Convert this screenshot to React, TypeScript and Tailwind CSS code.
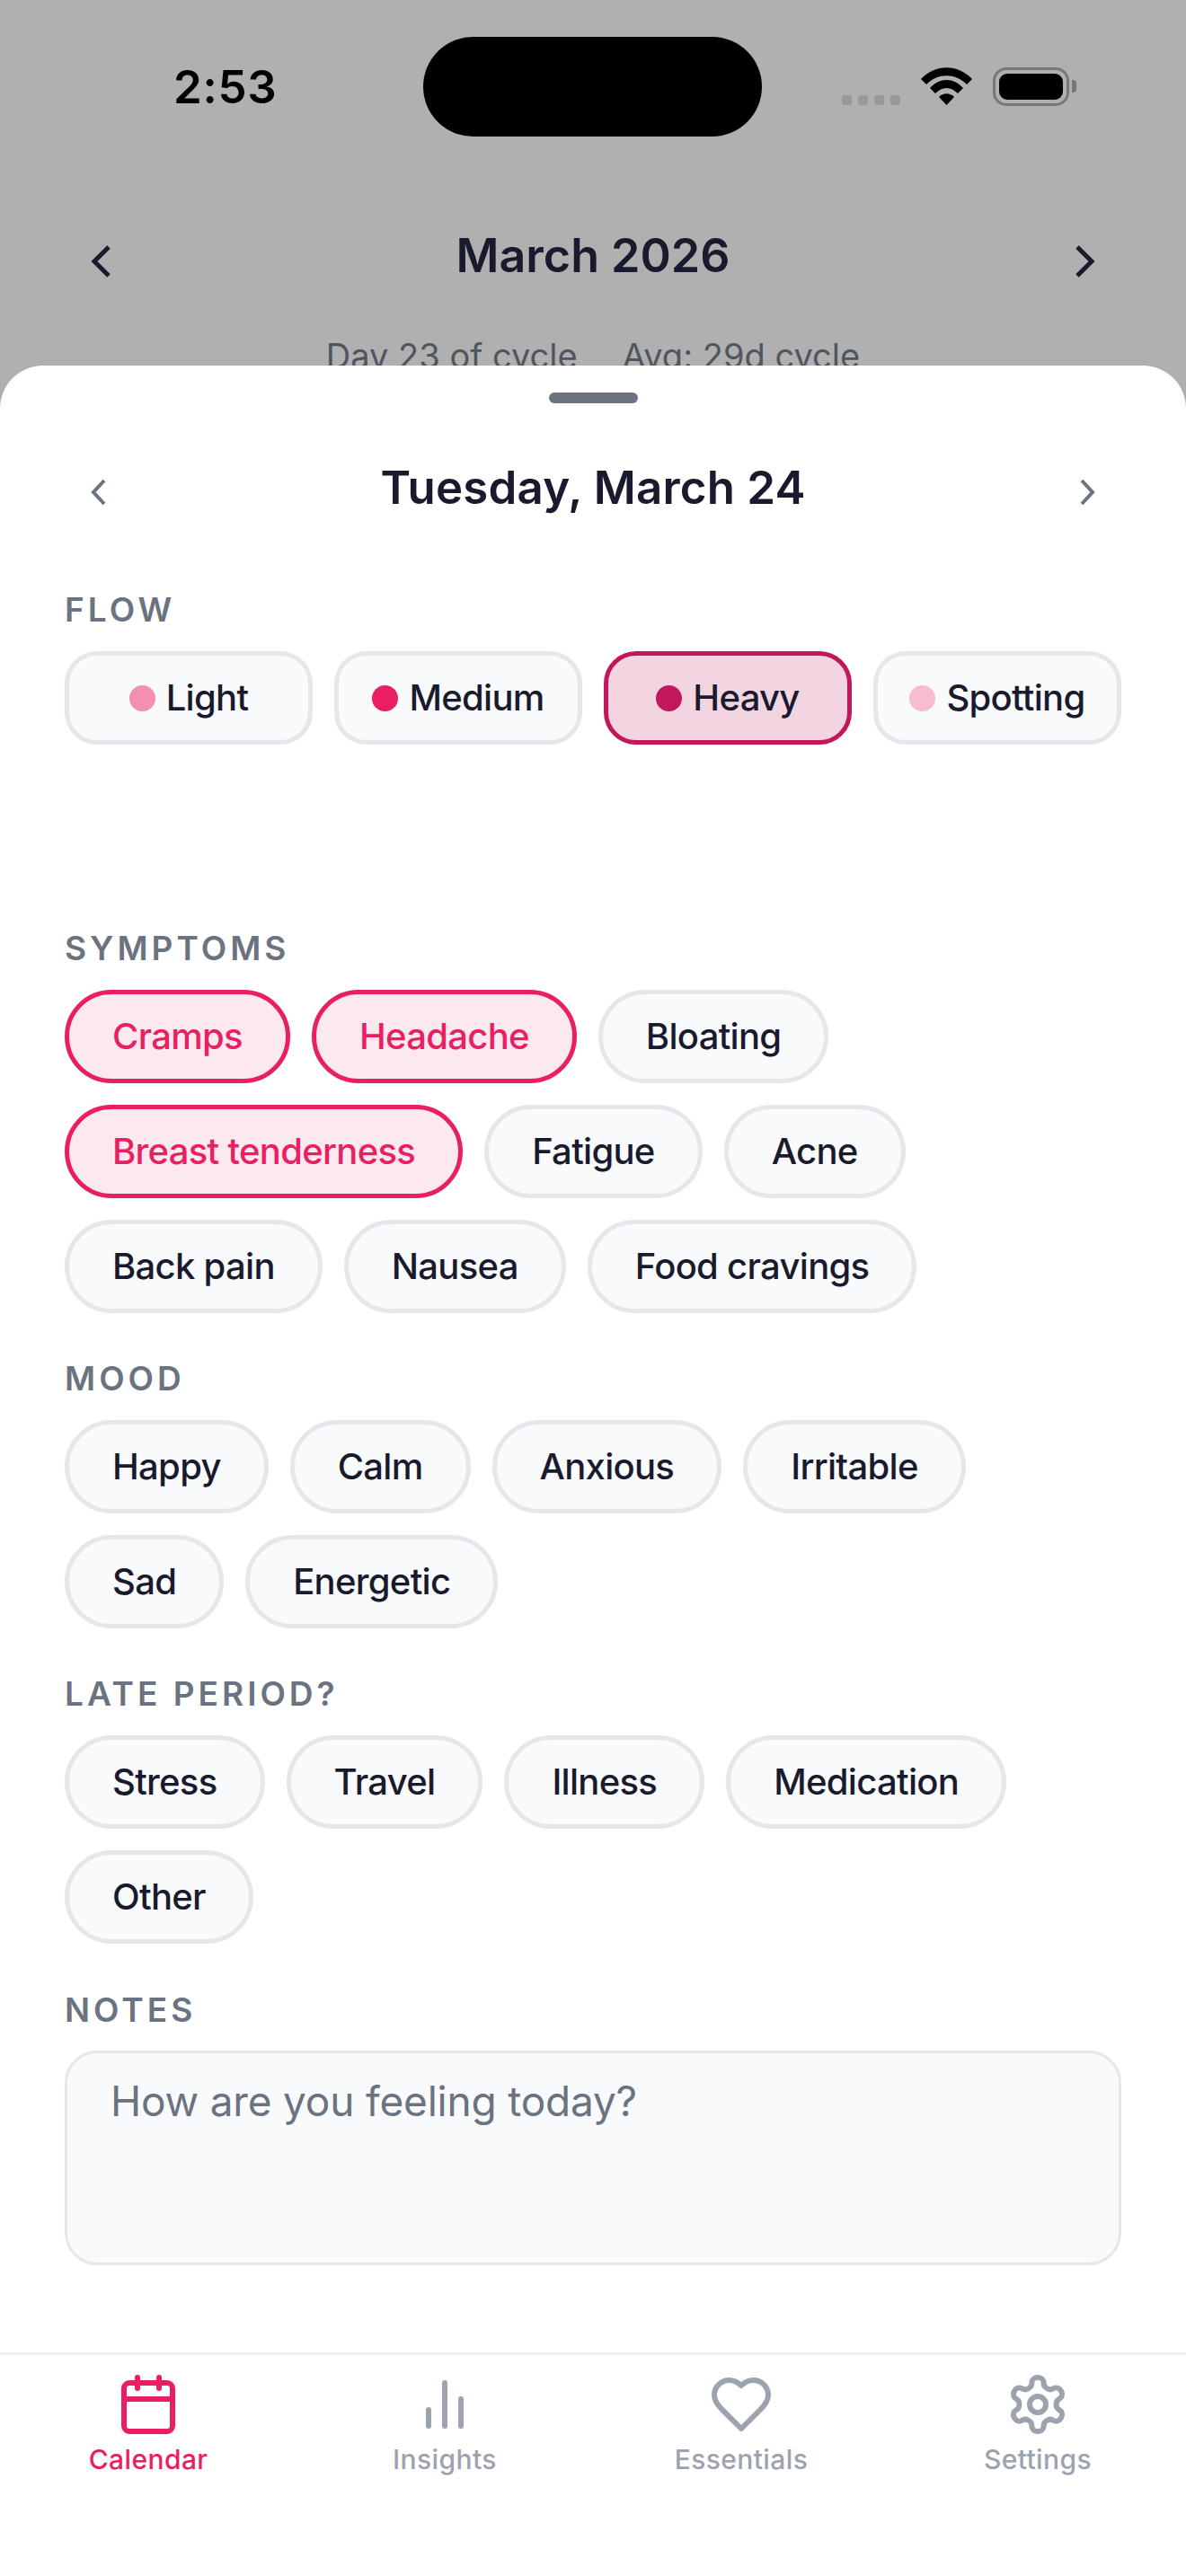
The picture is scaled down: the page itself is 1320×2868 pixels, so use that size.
const FLOW = [
  { label: "Light", dot: "bg-[#F48FB1]" },
  { label: "Medium", dot: "bg-[#E91E63]" },
  { label: "Heavy", dot: "bg-[#C2185B]", active: true },
  { label: "Spotting", dot: "bg-[#F8BBD0]" },
];

const SYMPTOMS = [
  { label: "Cramps", active: true },
  { label: "Headache", active: true },
  { label: "Bloating" },
  { label: "Breast tenderness", active: true },
  { label: "Fatigue" },
  { label: "Acne" },
  { label: "Back pain" },
  { label: "Nausea" },
  { label: "Food cravings" },
];

const MOODS = ["Happy", "Calm", "Anxious", "Irritable", "Sad", "Energetic"];
const LATE = ["Stress", "Travel", "Illness", "Medication", "Other"];

function Chip({ label, active }: { label: string; active?: boolean }) {
  return (
    <button
      className={`h-[104px] px-[48px] rounded-full border-[5px] text-[40px] tracking-[-0.7px] font-[450] ${
        active
          ? "border-[#E91E63] bg-[#FCE8EF] text-[#E91E63]"
          : "border-[#E5E7EB] bg-[#F9FAFB] text-[#1A1A2E]"
      }`}
    >
      {label}
    </button>
  );
}

function SectionLabel({ children }: { children: string }) {
  return (
    <div className="text-[37px] leading-[48px] font-semibold tracking-[4px] text-[#6B7280]">
      {children}
    </div>
  );
}

function ChipGroup({ items }: { items: { label: string; active?: boolean }[] }) {
  return (
    <div className="flex flex-wrap gap-[24px] mt-[22px]">
      {items.map((item) => (
        <Chip key={item.label} label={item.label} active={item.active} />
      ))}
    </div>
  );
}

function BigChevron({ right }: { right?: boolean }) {
  return (
    <svg
      className={`w-[24px] h-[36px] translate-y-[6px] ${right ? "rotate-180" : ""}`}
      viewBox="0 0 24 36"
      fill="none"
      stroke="#1A1A2E"
      strokeWidth="5"
    >
      <path d="M21 2 L5 18 L21 34" />
    </svg>
  );
}

function SmallChevron({ right }: { right?: boolean }) {
  return (
    <svg
      className={`w-[18px] h-[30px] translate-y-[5px] ${right ? "rotate-180" : ""}`}
      viewBox="0 0 18 30"
      fill="none"
      stroke="#6B7280"
      strokeWidth="4"
    >
      <path d="M16 2 L4 15 L16 28" />
    </svg>
  );
}

function StatusBar() {
  return (
    <div className="relative h-[150px]">
      <span className="absolute left-[193px] top-[66px] text-[51px] leading-[62px] font-semibold tracking-[0.7px] text-black">
        2:53
      </span>
      <div className="absolute left-[471px] top-[41px] w-[377px] h-[111px] rounded-full bg-black" />
      <div className="absolute left-[937px] top-[106px] flex gap-[7px]">
        <span className="w-[11px] h-[11px] rounded-[3px] bg-[#999999]" />
        <span className="w-[11px] h-[11px] rounded-[3px] bg-[#999999]" />
        <span className="w-[11px] h-[11px] rounded-[3px] bg-[#999999]" />
        <span className="w-[11px] h-[11px] rounded-[3px] bg-[#999999]" />
      </div>
      <svg className="absolute left-[1025px] top-[75px]" width="57" height="42" viewBox="0 0 57 42">
        <path d="M0 13 C16 -4 41 -4 57 13 L51 19 C38 6 19 6 6 19 Z" fill="#000" />
        <path d="M10 23 C21 11 36 11 47 23 L41 29 C33 21 24 21 16 29 Z" fill="#000" />
        <path d="M20 33 C25 28 32 28 37 33 L28.500 42 Z" fill="#000" />
      </svg>
      <div className="absolute left-[1105px] top-[75px] w-[85px] h-[43px] rounded-[15px] border-[3px] border-[#777777] p-[4px]">
        <div className="w-full h-full rounded-[9px] bg-black" />
      </div>
      <div className="absolute left-[1193px] top-[89px] w-[5px] h-[14px] rounded-r-[4px] bg-[#777777]" />
    </div>
  );
}

function CalendarBackdrop() {
  return (
    <div>
      <StatusBar />
      <div className="flex items-center justify-between px-[100px] mt-[100px]">
        <BigChevron />
        <span className="text-[52px] leading-[70px] font-semibold text-[#1A1A2E]">March 2026</span>
        <BigChevron right />
      </div>
      <div className="flex justify-center gap-[50px] mt-[52px] text-[38px] leading-[48px] text-[#50565F]">
        <span>Day 23 of cycle</span>
        <span>Avg: 29d cycle</span>
      </div>
    </div>
  );
}

function NavIcon({ children, color }: { children: React.ReactNode; color: string }) {
  return (
    <svg
      className={`w-[72px] h-[72px] ${color}`}
      viewBox="0 0 24 24"
      fill="none"
      stroke="currentColor"
      strokeWidth="2"
      strokeLinecap="round"
      strokeLinejoin="round"
    >
      {children}
    </svg>
  );
}

function BottomNav() {
  return (
    <div className="grid grid-cols-4 border-t-[3px] border-[#EEEEF0] h-[249px] pt-[19px]">
      <div className="flex flex-col items-center">
        <NavIcon color="text-[#E91E63]">
          <rect x="3" y="4" width="18" height="18" rx="2" />
          <path d="M16 2v4M8 2v4M3 10h18" />
        </NavIcon>
        <span className="text-[30px] leading-[36px] font-medium tracking-[0.4px] text-[#E91E63] mt-[7px]">Calendar</span>
      </div>
      <div className="flex flex-col items-center">
        <NavIcon color="text-[#9CA3AF]">
          <path d="M18 20V10M12 20V4M6 20v-6" />
        </NavIcon>
        <span className="text-[30px] leading-[36px] font-medium tracking-[0.4px] text-[#9CA3AF] mt-[7px]">Insights</span>
      </div>
      <div className="flex flex-col items-center">
        <NavIcon color="text-[#9CA3AF]">
          <path d="M19 14c1.490-1.460 3-3.210 3-5.500A5.500 5.500 0 0 0 16.500 3c-1.760 0-3 .5-4.500 2-1.500-1.500-2.740-2-4.500-2A5.500 5.500 0 0 0 2 8.500c0 2.300 1.500 4.050 3 5.500l7 7Z" />
        </NavIcon>
        <span className="text-[30px] leading-[36px] font-medium tracking-[0.4px] text-[#9CA3AF] mt-[7px]">Essentials</span>
      </div>
      <div className="flex flex-col items-center">
        <NavIcon color="text-[#9CA3AF]">
          <path d="M12.220 2h-.44a2 2 0 0 0-2 2v.18a2 2 0 0 1-1 1.730l-.43.25a2 2 0 0 1-2 0l-.15-.08a2 2 0 0 0-2.730.73l-.22.38a2 2 0 0 0 .73 2.730l.15.1a2 2 0 0 1 1 1.720v.51a2 2 0 0 1-1 1.740l-.15.09a2 2 0 0 0-.73 2.730l.22.38a2 2 0 0 0 2.730.73l.15-.08a2 2 0 0 1 2 0l.43.25a2 2 0 0 1 1 1.730V20a2 2 0 0 0 2 2h.44a2 2 0 0 0 2-2v-.18a2 2 0 0 1 1-1.730l.43-.25a2 2 0 0 1 2 0l.15.08a2 2 0 0 0 2.730-.73l.22-.39a2 2 0 0 0-.73-2.730l-.15-.08a2 2 0 0 1-1-1.740v-.5a2 2 0 0 1 1-1.740l.15-.09a2 2 0 0 0 .73-2.730l-.22-.38a2 2 0 0 0-2.730-.73l-.15.08a2 2 0 0 1-2 0l-.43-.25a2 2 0 0 1-1-1.730V4a2 2 0 0 0-2-2z" />
          <circle cx="12" cy="12" r="3" />
        </NavIcon>
        <span className="text-[30px] leading-[36px] font-medium tracking-[0.4px] text-[#9CA3AF] mt-[7px]">Settings</span>
      </div>
    </div>
  );
}

export default function App() {
  return (
    <div className="relative w-[1320px] h-[2868px] overflow-hidden bg-[#B0B0B0] font-['Inter',sans-serif]">
      <CalendarBackdrop />

      {/* Day sheet */}
      <div className="absolute left-0 right-0 top-[407px] bottom-0 flex flex-col bg-white rounded-t-[48px]">
        <div className="mx-auto mt-[30px] w-[99px] h-[12px] rounded-full bg-[#6B7280]" />

        <div className="flex-1 px-[72px]">
          <div className="flex items-center justify-between mt-[59px] px-[28px]">
            <SmallChevron />
            <span className="text-[51px] leading-[70px] font-semibold tracking-[0.2px] text-[#1A1A2E]">Tuesday, March 24</span>
            <SmallChevron right />
          </div>

          <div className="mt-[77px]">
            <SectionLabel>FLOW</SectionLabel>
            <div className="grid grid-cols-4 gap-[24px] mt-[22px]">
              {FLOW.map((f) => (
                <button
                  key={f.label}
                  className={`h-[104px] rounded-[36px] border-[5px] flex items-center justify-center gap-[12px] text-[40px] tracking-[-0.7px] font-[450] text-[#1A1A2E] ${
                    f.active ? "border-[#C2185B] bg-[#F3D5E2]" : "border-[#E5E7EB] bg-[#F9FAFB]"
                  }`}
                >
                  <span className={`w-[29px] h-[29px] rounded-full ${f.dot}`} />
                  {f.label}
                </button>
              ))}
            </div>
          </div>

          <div className="mt-[203px]">
            <SectionLabel>SYMPTOMS</SectionLabel>
            <ChipGroup items={SYMPTOMS} />
          </div>

          <div className="mt-[49px]">
            <SectionLabel>MOOD</SectionLabel>
            <ChipGroup items={MOODS.map((label) => ({ label }))} />
          </div>

          <div className="mt-[49px]">
            <SectionLabel>LATE PERIOD?</SectionLabel>
            <ChipGroup items={LATE.map((label) => ({ label }))} />
          </div>

          <div className="mt-[50px]">
            <SectionLabel>NOTES</SectionLabel>
            <textarea
              readOnly
              placeholder="How are you feeling today?"
              className="block w-full h-[239px] mt-[21px] px-[48px] py-[26px] rounded-[36px] border-[3px] border-[#E5E7EB] bg-[#F9FAFB] text-[46px] leading-[54px] tracking-[-0.2px] placeholder:text-[#6B7280] resize-none outline-none"
            />
          </div>
        </div>

        <BottomNav />
      </div>
    </div>
  );
}
